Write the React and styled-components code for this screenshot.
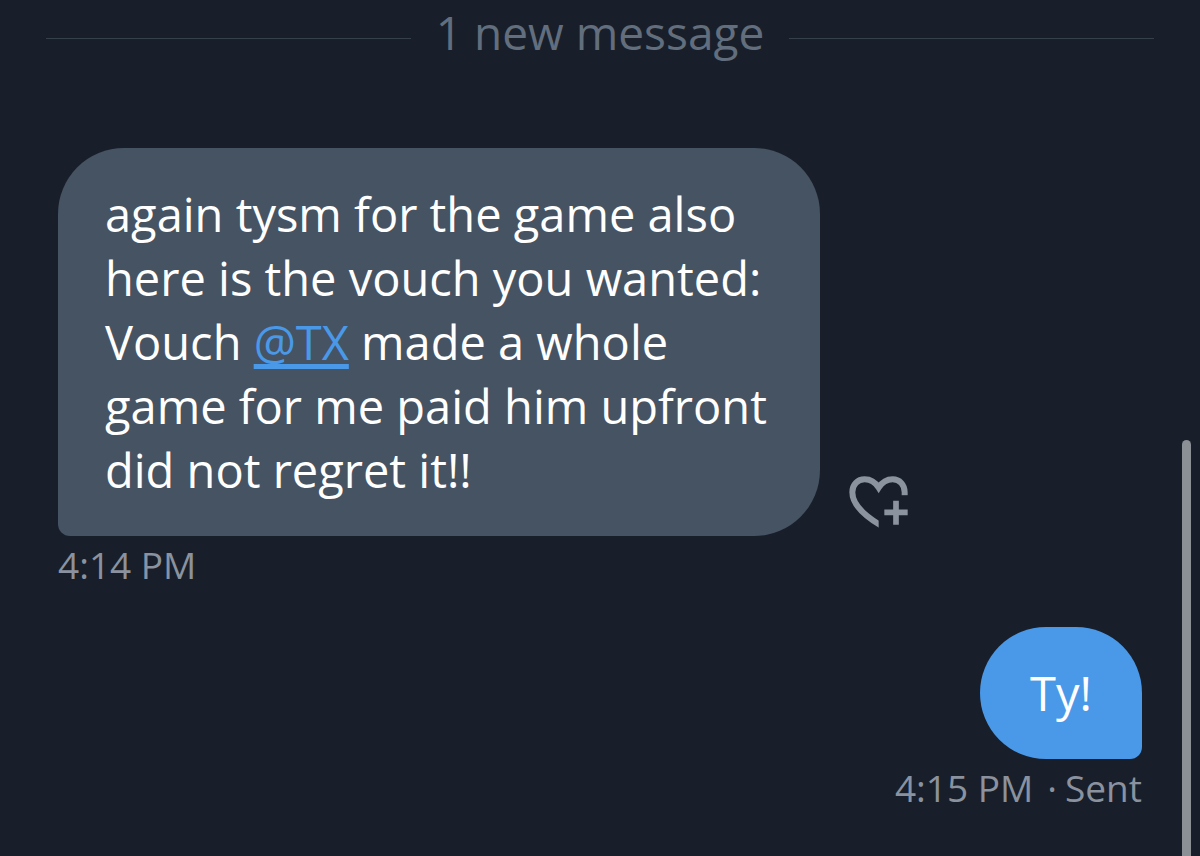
import React from 'react';
import styled, { createGlobalStyle } from 'styled-components';

const GlobalStyle = createGlobalStyle`
    * {
        box-sizing: border-box;
    }

    body {
        margin: 0;
        background-color: #181f2a;
        font-family: 'Open Sans', 'Noto Sans', sans-serif;
    }
`;

const Conversation = styled.main`
    display: flex;
    flex-direction: column;
    padding: 0 58px 40px;
`;

const Divider = styled.div`
    display: flex;
    align-items: center;
    gap: 25px;
    margin: 0 -12px 84px;
    color: #626e7d;
    font-size: 46px;
    line-height: 64px;
    white-space: nowrap;

    &::before,
    &::after {
        content: '';
        flex: 1;
        height: 1px;
        margin-top: 12px;
        background-color: #36404d;
    }
`;

const Message = styled.article`
    display: flex;
    flex-direction: column;
    align-items: ${({ $sent }) => ($sent ? 'flex-end' : 'flex-start')};
    margin-bottom: 36px;
`;

const BubbleRow = styled.div`
    display: flex;
    align-items: flex-end;
    gap: 29px;
`;

const Bubble = styled.p`
    min-width: 162px;
    max-width: 762px;
    margin: 0;
    padding: 34px 47px;
    border-radius: ${({ $sent }) => ($sent ? '66px 66px 12px 66px' : '66px 66px 66px 12px')};
    background-color: ${({ $sent }) => ($sent ? '#4a99e9' : '#465362')};
    color: #fff;
    font-size: 47px;
    line-height: 64px;
    text-align: ${({ $sent }) => ($sent ? 'center' : 'left')};
`;

const Mention = styled.a`
    color: #4a99e9;
    text-decoration: underline;
    text-decoration-thickness: 5px;
    text-underline-offset: 4px;
    text-decoration-skip-ink: none;
`;

const ReactButton = styled.button`
    display: flex;
    padding: 0;
    margin-bottom: 8px;
    border: none;
    background: none;
    color: #8b939f;
    cursor: pointer;
`;

const Meta = styled.div`
    display: flex;
    margin-top: 3px;
    color: #8b929f;
    font-size: 37px;
    line-height: 52px;
`;

const Dot = styled.span`
    margin: 0 8px 0 14px;
`;

const ScrollThumb = styled.div`
    position: fixed;
    top: 440px;
    right: 9px;
    bottom: 0;
    width: 9px;
    border-radius: 5px 5px 0 0;
    background-color: #8b8f96;
`;

const HeartPlus = () => (
    <svg width="60" height="52" viewBox="56 49 180 156" fill="none" stroke="currentColor" aria-hidden="true">
        <path
            d="M151 197C104 169 66 136 66 98C66 74 82 59 103 59C123 59 136 70 145 84C154 70 166 59 187 59C208 59 223 75 223 98V107"
            strokeWidth="18"
            clipPath="url(#heart-cut)"
        />
        <path d="M162 158H232M197 123V195" strokeWidth="17" />
        <clipPath id="heart-cut">
            <path d="M50 40H240V108H145V210H50Z" />
        </clipPath>
    </svg>
);

const App = () => (
    <>
        <GlobalStyle />
        <Conversation>
            <Divider>1 new message</Divider>

            <Message>
                <BubbleRow>
                    <Bubble>
                        again tysm for the game also here is the vouch you wanted:
                        Vouch <Mention href="#tx">@TX</Mention> made a whole game for me
                        paid him upfront did not regret it!!
                    </Bubble>
                    <ReactButton type="button" aria-label="Add reaction">
                        <HeartPlus />
                    </ReactButton>
                </BubbleRow>
                <Meta>
                    <time>4:14 PM</time>
                </Meta>
            </Message>

            <Message $sent>
                <Bubble $sent>Ty!</Bubble>
                <Meta>
                    <time>4:15 PM</time>
                    <Dot>·</Dot>
                    <span>Sent</span>
                </Meta>
            </Message>
        </Conversation>
        <ScrollThumb />
    </>
);

export default App;
